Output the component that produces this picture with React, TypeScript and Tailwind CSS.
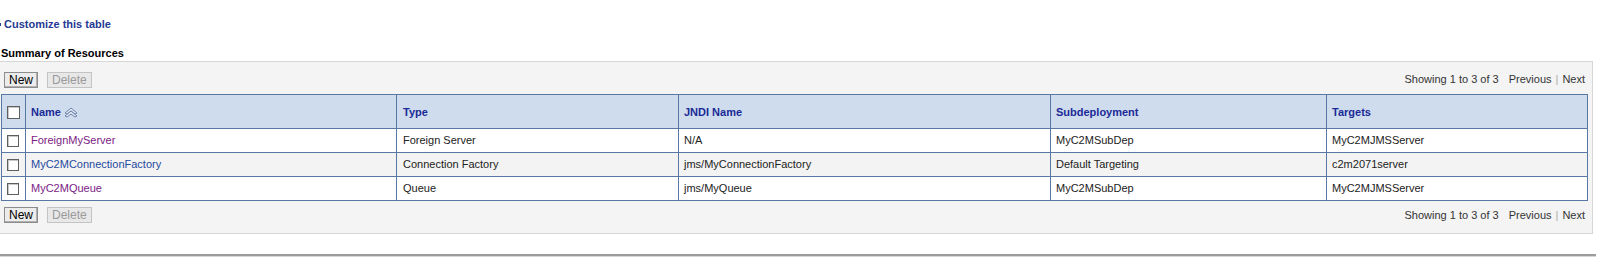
import React from 'react';

interface ResourceRow {
  name: string;
  visited: boolean;
  type: string;
  jndi: string;
  subdeployment: string;
  targets: string;
}

const rows: ResourceRow[] = [
  { name: 'ForeignMyServer', visited: true, type: 'Foreign Server', jndi: 'N/A', subdeployment: 'MyC2MSubDep', targets: 'MyC2MJMSServer' },
  { name: 'MyC2MConnectionFactory', visited: false, type: 'Connection Factory', jndi: 'jms/MyConnectionFactory', subdeployment: 'Default Targeting', targets: 'c2m2071server' },
  { name: 'MyC2MQueue', visited: true, type: 'Queue', jndi: 'jms/MyQueue', subdeployment: 'MyC2MSubDep', targets: 'MyC2MJMSServer' },
];

const Box: React.FC<{ size?: string }> = ({ size = 'w-[12px] h-[12px]' }) => (
  <span className={`block ${size} border border-[#5f5f5f] bg-white shadow-[inset_1px_1px_0_#c8c8c8]`} />
);

const SortIcon = () => (
  <svg width="14" height="11" viewBox="0 0 14 11" className="ml-[3px] inline-block">
    <path d="M1 6 L7 1 L13 6 L11 7 L7 4 L3 7 Z" fill="#dfe6f2" stroke="#6f86ad" strokeWidth="1" strokeLinejoin="round" />
    <path d="M1 10 L7 5 L13 10 L11 11 L7 8 L3 11 Z" fill="#dfe6f2" stroke="#6f86ad" strokeWidth="1" strokeLinejoin="round" transform="translate(0,-1)" />
  </svg>
);

const Toolbar: React.FC<{ height: string }> = ({ height }) => (
  <div className={`flex items-center justify-between ${height} pl-[4px] pr-[7px]`}>
    <div className="flex items-center gap-[9px]">
      <button className="h-[16px] px-[4px] text-[12px] leading-[14px] text-black bg-[#ececec] border border-[#8c8c8c] shadow-[inset_-1px_-1px_0_#b0b0b0]">
        New
      </button>
      <button className="h-[16px] px-[4px] text-[12px] leading-[14px] text-[#9a9a9a] bg-[#e8e8e8] border border-[#c4c4c4]">
        Delete
      </button>
    </div>
    <div className="text-[11px] text-[#333]">
      Showing 1 to 3 of 3<span className="ml-[10px]">Previous</span>
      <span className="mx-[4px] text-[#aaa]">|</span>Next
    </div>
  </div>
);

export default function App() {
  return (
    <div className="w-[1600px] h-[272px] bg-white font-['Liberation_Sans',Arial,sans-serif] text-[11px] text-black">
      <div className="h-[15px]" />
      <div className="flex items-center h-[18px] pl-[4px] relative">
        <span className="absolute left-[-2px] top-[8px] w-[3px] h-[3px] bg-[#27438e]" />
        <a className="font-bold text-[#1f3a93] text-[11px]">Customize this table</a>
      </div>
      <div className="h-[12px]" />
      <div className="h-[16px] pl-[1px] font-bold leading-[16px]">Summary of Resources</div>

      <div className="w-[1593px] bg-[#f4f4f4] border border-[#d6d6d6] border-l-0">
        <Toolbar height="h-[32px] pt-[3px]" />
        <table className="ml-[1px] border-collapse table-fixed w-[1586px] border border-[#5878a4]">
          <colgroup>
            <col className="w-[24px]" />
            <col className="w-[371px]" />
            <col className="w-[282px]" />
            <col className="w-[372px]" />
            <col className="w-[276px]" />
            <col className="w-[261px]" />
          </colgroup>
          <thead>
            <tr className="h-[34px] bg-[#cfdcee] text-left text-[#1a2a96] font-bold">
              <th className="border border-[#5878a4] pl-[5px] pt-[2px]"><Box size="w-[13px] h-[13px]" /></th>
              <th className="border border-[#5878a4] pl-[5px] pt-[2px]">
                <span className="flex items-center">Name<SortIcon /></span>
              </th>
              <th className="border border-[#5878a4] pl-[6px] pt-[2px]">Type</th>
              <th className="border border-[#5878a4] pl-[5px] pt-[2px]">JNDI Name</th>
              <th className="border border-[#5878a4] pl-[5px] pt-[2px]">Subdeployment</th>
              <th className="border border-[#5878a4] pl-[5px] pt-[2px]">Targets</th>
            </tr>
          </thead>
          <tbody>
            {rows.map((r, i) => (
              <tr key={r.name} className={`h-[24px] ${i % 2 === 1 ? 'bg-[#f3f3f3]' : 'bg-white'}`}>
                <td className="border border-[#5878a4] pl-[5px]"><Box /></td>
                <td className="border border-[#5878a4] pl-[5px]">
                  <a className={r.visited ? 'text-[#7b2283]' : 'text-[#1f4a9f]'}>{r.name}</a>
                </td>
                <td className="border border-[#5878a4] pl-[6px] text-[#222]">{r.type}</td>
                <td className="border border-[#5878a4] pl-[5px] text-[#222]">{r.jndi}</td>
                <td className="border border-[#5878a4] pl-[5px] text-[#222]">{r.subdeployment}</td>
                <td className="border border-[#5878a4] pl-[5px] text-[#222]">{r.targets}</td>
              </tr>
            ))}
          </tbody>
        </table>
        <Toolbar height="h-[32px] pb-[4px]" />
      </div>

      <div className="h-[20px]" />
      <div className="w-[1596px] h-[3px] border-t-2 border-[#9c9c9c] bg-[#d8d8d8]" />
    </div>
  );
}
